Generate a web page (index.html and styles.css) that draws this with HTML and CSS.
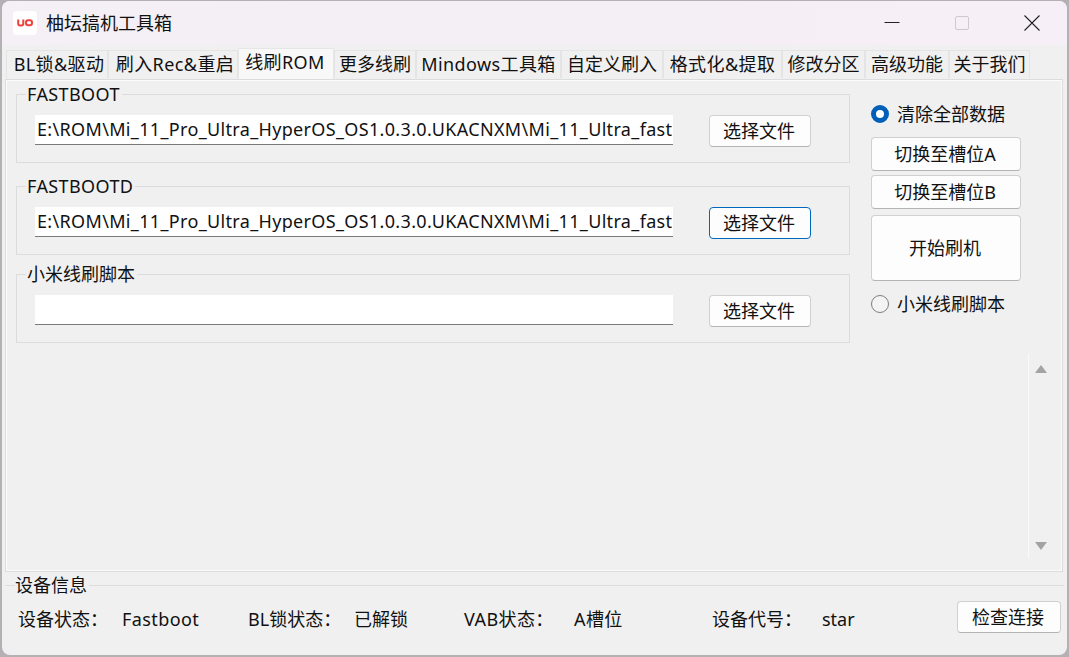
FILE: index.html
```html
<!DOCTYPE html>
<html lang="zh-CN">
<head>
<meta charset="utf-8">
<title>柚坛搞机工具箱</title>
<link rel="stylesheet" href="styles.css">
</head>
<body>
<div class="window">
  <header class="titlebar">
    <div class="app-icon">
      <svg width="16" height="8" viewBox="0 0 16 8"><path d="M1.2 0.5V4.5Q1.2 6.5 3 6.5H4.5Q6.3 6.5 6.3 4.5V0.5" fill="none" stroke="#f0413c" stroke-width="2"/><rect x="9" y="1.2" width="6" height="5" rx="2.2" fill="none" stroke="#f0413c" stroke-width="2"/></svg>
    </div>
    <div class="app-title">柚坛搞机工具箱</div>
    <div class="controls">
      <button class="ctl"><svg width="16" height="16" viewBox="0 0 16 16"><path d="M0.5 7.5H15.5" stroke="#222" fill="none"/></svg></button>
      <button class="ctl"><svg width="16" height="16" viewBox="0 0 16 16"><rect x="1.5" y="1.5" width="13" height="13" rx="1.5" stroke="#cfc8d0" fill="none"/></svg></button>
      <button class="ctl"><svg width="16" height="16" viewBox="0 0 16 16"><path d="M0.5 0.5L15.5 15.5M15.5 0.5L0.5 15.5" stroke="#222" stroke-width="1.1" fill="none"/></svg></button>
    </div>
  </header>
  <nav class="tabs">
    <div class="tab mix nudge">BL锁&amp;驱动</div>
    <div class="tab mix nudge">刷入Rec&amp;重启</div>
    <div class="tab active mix">线刷ROM</div>
    <div class="tab">更多线刷</div>
    <div class="tab mix">Mindows工具箱</div>
    <div class="tab">自定义刷入</div>
    <div class="tab mix">格式化&amp;提取</div>
    <div class="tab">修改分区</div>
    <div class="tab">高级功能</div>
    <div class="tab">关于我们</div>
  </nav>
  <main class="pane">
    <section class="groups">
      <fieldset class="group">
        <legend class="latin">FASTBOOT</legend>
        <div class="path-row">
          <div class="path">E:\ROM\Mi_11_Pro_Ultra_HyperOS_OS1.0.3.0.UKACNXM\Mi_11_Ultra_fast</div>
          <button class="btn pick">选择文件</button>
        </div>
      </fieldset>
      <fieldset class="group second">
        <legend class="latin">FASTBOOTD</legend>
        <div class="path-row">
          <div class="path">E:\ROM\Mi_11_Pro_Ultra_HyperOS_OS1.0.3.0.UKACNXM\Mi_11_Ultra_fast</div>
          <button class="btn pick focus">选择文件</button>
        </div>
      </fieldset>
      <fieldset class="group third">
        <legend>小米线刷脚本</legend>
        <div class="path-row">
          <div class="path"></div>
          <button class="btn pick">选择文件</button>
        </div>
      </fieldset>
    </section>
    <aside class="side">
      <div class="radio on"><span class="dot"></span>清除全部数据</div>
      <button class="btn slot first">切换至槽位A</button>
      <button class="btn slot">切换至槽位B</button>
      <button class="btn start">开始刷机</button>
      <div class="radio script"><span class="dot"></span>小米线刷脚本</div>
    </aside>
    <div class="scroll">
      <svg width="12" height="8" viewBox="0 0 12 8"><path d="M6 0L12 8H0Z" fill="#a3a3a3"/></svg>
      <svg width="12" height="8" viewBox="0 0 12 8"><path d="M0 0H12L6 8Z" fill="#a3a3a3"/></svg>
    </div>
  </main>
  <fieldset class="device">
    <legend>设备信息</legend>
    <div class="device-row">
      <span>设备状态：</span>
      <span class="latin">Fastboot</span>
      <span>BL锁状态：</span>
      <span>已解锁</span>
      <span class="mix">VAB状态：</span>
      <span class="mix">A槽位</span>
      <span>设备代号：</span>
      <span>star</span>
      <button class="btn check">检查连接</button>
    </div>
  </fieldset>
</div>
</body>
</html>
```
FILE: styles.css
```css
* { box-sizing: border-box; }
html, body { margin: 0; height: 100%; }
body {
  background: #b4b0b4;
  padding: 1px 2px 2px 2px;
  font: 18px/24px "Noto Sans", "Noto Sans CJK SC", sans-serif;
  color: #111;
  overflow: hidden;
}
.window {
  height: 654px;
  width: 1065px;
  background: #f0f0f0;
  border-radius: 8px;
  overflow: hidden;
  display: flex;
  flex-direction: column;
}
.latin { letter-spacing: 0.4px; }
.mix { letter-spacing: 0.4px; }
.titlebar {
  height: 44px;
  flex: none;
  background: linear-gradient(90deg, #f5eff6, #f4eff4 55%, #f7eff7);
  display: flex;
  align-items: center;
  padding-left: 11px;
}
.app-icon {
  width: 24px;
  height: 24px;
  background: #fff;
  border-radius: 4px;
  display: flex;
  align-items: center;
  justify-content: center;
}
.app-title { margin-left: 9px; }
.controls {
  margin-left: auto;
  display: flex;
}
.ctl {
  width: 70px;
  height: 44px;
  padding: 0;
  border: 0;
  background: none;
  display: flex;
  align-items: center;
  justify-content: center;
}
.tabs {
  flex: none;
  height: 34px;
  padding: 3px 0 0 4px;
  display: grid;
  grid-template-columns: 102px 130px 96px 82px 145px 102px 119px 83px 84px 81px;
  justify-content: start;
  align-items: end;
  position: relative;
  z-index: 1;
}
.tab {
  height: 28px;
  margin-bottom: 1px;
  background: #f0f0f0;
  border: 1px solid #e4e4e4;
  border-bottom: 0;
  text-align: center;
  line-height: 27px;
  white-space: nowrap;
}
.tab.nudge { padding-left: 4px; }
.tab.active {
  height: 31px;
  margin-bottom: 0;
  padding-right: 2px;
  background: #f8f8f8;
  border-color: #e6e6e6;
  line-height: 26px;
}
.pane {
  flex: none;
  height: 493px;
  margin: 0 3px;
  width: 1058px;
  border: 1px solid #dcdcdc;
  box-shadow: inset 0 0 0 1px #fbfbfb;
  padding: 2px 0 0 10px;
  display: flex;
  align-items: flex-start;
}
.groups { width: 834px; flex: none; }
.group {
  margin: 0;
  padding: 9px 0 0 18px;
  height: 81px;
  border: 1px solid #dcdcdc;
  min-width: 0;
}
.group legend {
  padding: 0 2px 0 1px;
  margin-left: -9px;
}
.second { margin-top: 11px; }
.third { margin-top: 7px; }
.path-row { display: flex; align-items: flex-start; }
.path {
  width: 638px;
  height: 30px;
  flex: none;
  background: #fff;
  border-bottom: 1px solid #7a7a7a;
  padding: 0 0 0 2px;
  line-height: 29px;
  letter-spacing: 0.34px;
  white-space: nowrap;
}
.btn {
  font: inherit;
  color: inherit;
  background: #fdfdfd;
  border: 1px solid #d0d0d0;
  border-bottom-color: #b4b4b4;
  border-radius: 4px;
  padding: 0 2px 0 0;
}
.pick {
  width: 102px;
  height: 32px;
  margin-left: 36px;
}
.focus { border-color: #0067c0; }
.side {
  width: 150px;
  margin-left: 21px;
  flex: none;
  padding-top: 20px;
  display: flex;
  flex-direction: column;
}
.radio {
  display: flex;
  align-items: center;
  height: 24px;
}
.dot {
  width: 18px;
  height: 18px;
  flex: none;
  margin-right: 8px;
  border-radius: 50%;
  border: 1px solid #7d7d7d;
  background: #f4f4f4;
}
.on .dot {
  background: #fff;
  border: 5px solid #0060b8;
}
.slot { height: 34px; }
.slot.first { margin-top: 11px; margin-bottom: 4px; }
.start { height: 66px; margin-top: 6px; }
.script { margin-top: 11px; }
.scroll {
  width: 27px;
  height: 204px;
  margin: 272px 0 0 7px;
  border-left: 1px solid #fafafa;
  padding: 11px 0 8px 6px;
  display: flex;
  flex-direction: column;
  justify-content: space-between;
  flex: none;
}
.device {
  margin: 1px 3px 0;
  padding: 4px 2px 0 0;
  width: 1059px;
  min-width: 0;
  border: 0;
  border-top: 1px solid #dcdcdc;
}
.device legend {
  margin-left: 10px;
  padding: 0 2px 0 0;
}
.device-row {
  display: grid;
  grid-template-columns: 104px 126px 106px 110px 110px 138px 110px 135px 104px;
  align-items: center;
  padding-left: 13px;
}
.device-row span { padding-top: 3px; }
.check { height: 32px; }
```
